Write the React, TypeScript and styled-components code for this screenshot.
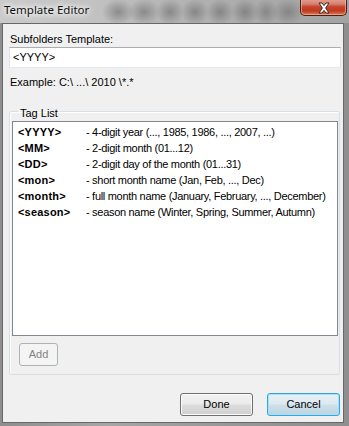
import React from "react";
import styled, { createGlobalStyle } from "styled-components";

const Global = createGlobalStyle`
  html, body { margin: 0; padding: 0; }
  body { width: 349px; height: 426px; overflow: hidden; background: #9c9c9c; }
  * { box-sizing: border-box; }
`;

const Window = styled.div`
  position: relative;
  width: 349px;
  height: 426px;
  display: flex;
  flex-direction: column;
  background: linear-gradient(90deg, #8e8e8e 0%, #a6a6a6 30%, #9a9a9a 60%, #8f8f8f 100%);
  overflow: hidden;
`;

const TitleBar = styled.div`
  position: relative;
  height: 23px;
  flex: none;
  display: flex;
  align-items: flex-start;
  background:
    radial-gradient(ellipse 16px 13px at 118px 12px, rgba(70,70,70,0.42), transparent),
    radial-gradient(ellipse 16px 13px at 144px 12px, rgba(70,70,70,0.4), transparent),
    radial-gradient(ellipse 14px 13px at 170px 12px, rgba(70,70,70,0.4), transparent),
    radial-gradient(ellipse 14px 13px at 195px 12px, rgba(70,70,70,0.4), transparent),
    radial-gradient(ellipse 14px 13px at 220px 12px, rgba(70,70,70,0.4), transparent),
    radial-gradient(ellipse 14px 13px at 245px 12px, rgba(70,70,70,0.4), transparent),
    radial-gradient(ellipse 12px 13px at 266px 12px, rgba(70,70,70,0.36), transparent),
    radial-gradient(ellipse 16px 13px at 288px 12px, rgba(70,70,70,0.36), transparent),
    linear-gradient(90deg, #cacaca 0%, #c3c3c3 25%, #b6b6b6 45%, #acacac 70%, #a3a3a3 100%);
  overflow: hidden;
`;

const Title = styled.span`
  position: relative;
  margin: 1px 0 0 4px;
  font-family: "Noto Sans", "Open Sans", sans-serif;
  font-size: 11.5px;
  line-height: 17px;
  color: #101010;
  text-shadow: 0 0 6px #ffffff, 0 0 10px #ffffff, 0 0 4px #ffffff;
`;

const CloseButton = styled.div`
  position: absolute;
  left: 300px;
  top: -2px;
  width: 47px;
  height: 18px;
  border: 1px solid #4a1e16;
  border-top: none;
  border-radius: 0 0 5px 5px;
  background: linear-gradient(180deg, #e8a899 0%, #d88070 35%, #c4442c 52%, #c23a22 75%, #d97a4c 100%);
  box-shadow: inset 0 0 0 1px rgba(255, 200, 180, 0.55);
  display: flex;
  align-items: center;
  justify-content: center;
  padding-top: 2px;
`;

const Client = styled.div`
  margin-left: 2px;
  width: 342px;
  height: 400px;
  flex: none;
  border: 1px solid #686868;
  background: #f0f0f0;
  display: flex;
  flex-direction: column;
  padding: 0 2px 0 6px;
  font-family: "Liberation Sans", Arial, sans-serif;
  font-size: 11px;
  line-height: 13px;
  color: #000;
`;

const Label = styled.div<{ $top: number }>`
  margin-top: ${(p) => p.$top}px;
  padding-left: 1px;
  height: 13px;
  white-space: nowrap;
`;

const TextInput = styled.div`
  margin-top: 1px;
  width: 332px;
  height: 21px;
  background: #fff;
  border: 1px solid #abadb3;
  border-color: #abadb3 #dbdfe6 #e3e9ef #e2e3ea;
  display: flex;
  align-items: center;
  padding-left: 3px;
  white-space: nowrap;
`;

const Group = styled.fieldset`
  margin: 14px 0 0 0;
  padding: 0 1px 0 2px;
  width: 331px;
  height: 272px;
  border: 1px solid #d5dfe5;
  border-radius: 2px;
  box-shadow: inset 1px 1px 0 #ffffff;
  display: flex;
  flex-direction: column;
  min-width: 0;
`;

const Legend = styled.legend`
  margin-left: 6px;
  padding: 4px 2px 0 2px;
  line-height: 13px;
  height: 17px;
`;

const ListBox = styled.div`
  margin-top: 1px;
  width: 326px;
  height: 215px;
  background: #fff;
  border: 1px solid #828790;
  padding: 2px 0 0 5px;
  overflow: hidden;
`;

const TagRow = styled.div`
  display: grid;
  grid-template-columns: 68px 1fr;
  height: 16px;
  line-height: 16px;
  white-space: nowrap;
`;

const Tag = styled.span`
  font-weight: bold;
  letter-spacing: 0.2px;
`;

const Desc = styled.span`
  letter-spacing: -0.3px;
`;

const Button = styled.div<{ $variant?: "default" | "disabled" }>`
  width: ${(p) => (p.$variant === "disabled" ? "39px" : "73px")};
  height: 23px;
  border-radius: 3px;
  display: flex;
  align-items: center;
  justify-content: center;
  white-space: nowrap;
  border: 1px solid
    ${(p) => (p.$variant === "disabled" ? "#adb2b5" : p.$variant === "default" ? "#2fa4e7" : "#707070")};
  color: ${(p) => (p.$variant === "disabled" ? "#838383" : "#000")};
  background: ${(p) =>
    p.$variant === "disabled"
      ? "#f4f4f4"
      : p.$variant === "default"
      ? "linear-gradient(180deg, #e6f1f7 0%, #dde9f0 48%, #cfe0ea 52%, #bcd3df 100%)"
      : "linear-gradient(180deg, #f2f2f2 0%, #ebebeb 48%, #dddddd 52%, #cfcfcf 100%)"};
  box-shadow: ${(p) =>
    p.$variant === "default"
      ? "inset 0 0 0 1px #a7e0fb"
      : p.$variant === "disabled"
      ? "none"
      : "inset 0 0 0 1px #fbfbfb"};
`;

const GroupFooter = styled.div`
  margin: 7px 0 0 7px;
  display: flex;
`;

const ButtonRow = styled.div`
  margin-top: 18px;
  width: 331px;
  display: flex;
  justify-content: flex-end;
  gap: 14px;
`;

const tags: [string, string][] = [
  ["<YYYY>", "- 4-digit year (..., 1985, 1986, ..., 2007, ...)"],
  ["<MM>", "- 2-digit month (01...12)"],
  ["<DD>", "- 2-digit day of the month (01...31)"],
  ["<mon>", "- short month name (Jan, Feb, ..., Dec)"],
  ["<month>", "- full month name (January, February, ..., December)"],
  ["<season>", "- season name (Winter, Spring, Summer, Autumn)"],
];

export default function App() {
  return (
    <>
      <Global />
      <Window>
        <TitleBar>
          <Title>Template Editor</Title>
          <CloseButton>
            <svg width="16" height="12" viewBox="0 0 16 12">
              <path
                d="M3 1 L6 1 L8 3.6 L10 1 L13 1 L9.6 6 L13 11 L10 11 L8 8.4 L6 11 L3 11 L6.4 6 Z"
                fill="#ffffff"
                stroke="#3a2a2a"
                strokeWidth="1"
                strokeLinejoin="round"
              />
            </svg>
          </CloseButton>
        </TitleBar>
        <Client>
          <Label $top={9}>Subfolders Template:</Label>
          <TextInput>{"<YYYY>"}</TextInput>
          <Label $top={8}>{"Example: C:\\ ...\\ 2010 \\*.*"}</Label>
          <Group>
            <Legend>Tag List</Legend>
            <ListBox>
              {tags.map(([t, d]) => (
                <TagRow key={t}>
                  <Tag>{t}</Tag>
                  <Desc>{d}</Desc>
                </TagRow>
              ))}
            </ListBox>
            <GroupFooter>
              <Button $variant="disabled">Add</Button>
            </GroupFooter>
          </Group>
          <ButtonRow>
            <Button>Done</Button>
            <Button $variant="default">Cancel</Button>
          </ButtonRow>
        </Client>
      </Window>
    </>
  );
}
